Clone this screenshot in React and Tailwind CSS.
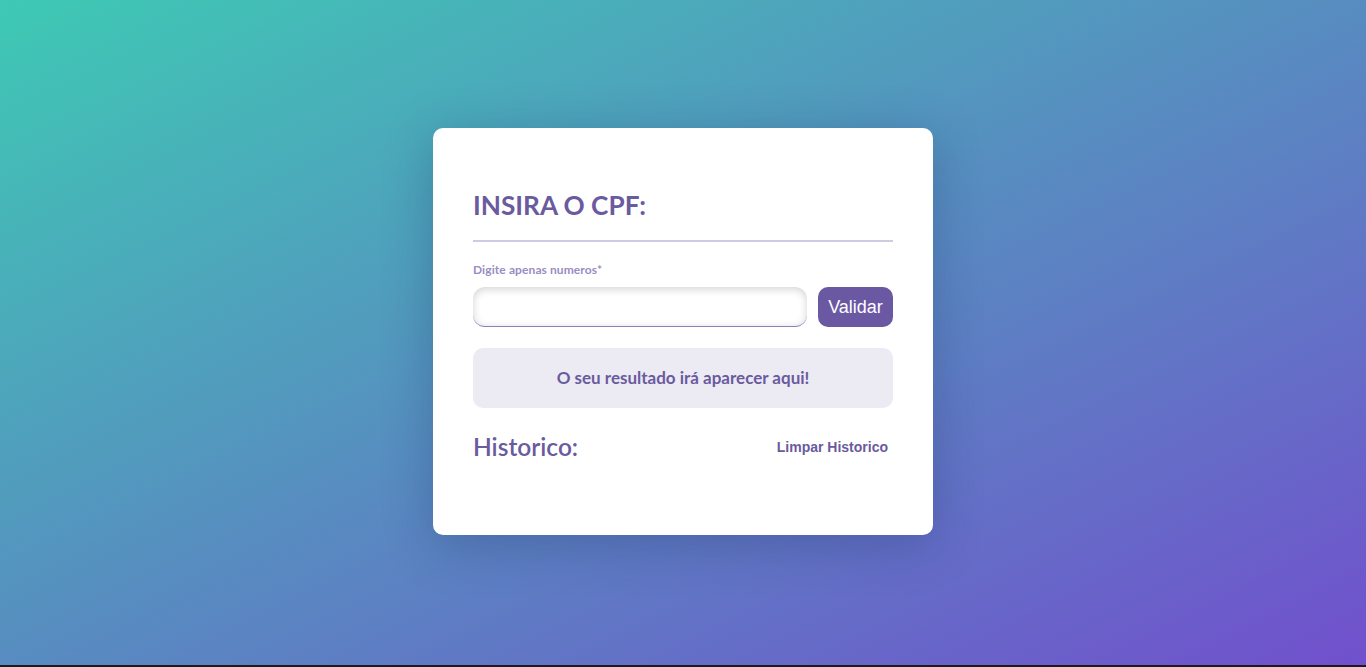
export default function App() {
  return (
    <div className="w-full h-[667px] bg-[#1b1b1f] overflow-hidden">
      <div className="w-full h-[665px] bg-[linear-gradient(to_bottom_right,#3ec9b4,#7150cd)] flex justify-center pt-[128px]">
        <div className="w-[500px] h-[407px] bg-white rounded-[10px] shadow-[0_10px_50px_rgba(20,40,90,0.28)] px-[40px] pt-[60px] font-['Lato','Open_Sans',sans-serif]">
          <h1 className="text-[26.2px] leading-[34px] font-bold text-[#6a5aa0]">INSIRA O CPF:</h1>
          <div className="mt-[18px] h-[2px] bg-[#d0cbe2]"></div>
          <label className="block mt-[21px] text-[12px] leading-[14px] font-bold text-[#9a8cc4] tracking-[0.1px]">Digite apenas numeros*</label>
          <div className="flex mt-[10px] gap-[11px]">
            <input className="flex-1 h-[40px] rounded-[12px] bg-white border-b border-[#8d7fb8] shadow-[inset_0_2px_8px_rgba(0,0,0,0.18)] outline-none px-3" />
            <button className="w-[75px] h-[40px] rounded-[10px] bg-[#6b58a3] text-white text-[18px] font-['Liberation_Sans',Arial,sans-serif]">Validar</button>
          </div>
          <div className="mt-[21px] h-[60px] rounded-[10px] bg-[#ecebf3] flex items-center justify-center text-[17px] font-bold text-[#6a5aa0]">
            O seu resultado irá aparecer aqui!
          </div>
          <div className="mt-[24px] flex items-center justify-between pr-[5px]">
            <h2 className="text-[24.5px] leading-[30px] font-semibold text-[#6a5aa0]">Historico:</h2>
            <button className="text-[14px] font-bold text-[#6a5aa0] font-['Liberation_Sans',Arial,sans-serif]">Limpar Historico</button>
          </div>
        </div>
      </div>
    </div>
  );
}
